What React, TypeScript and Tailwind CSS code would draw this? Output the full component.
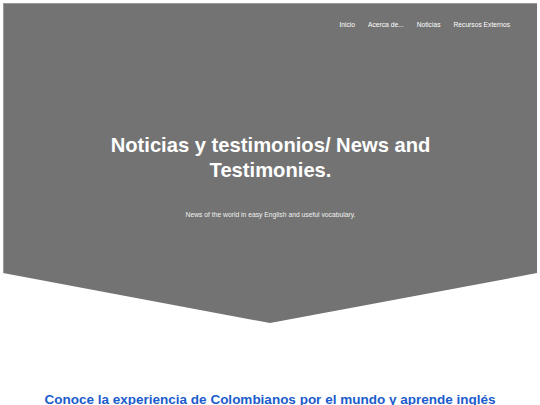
const NAV = ["Inicio", "Acerca de...", "Noticias", "Recursos Externos"];

export default function App() {
  return (
    <div
      className="min-h-screen bg-white p-[3px]"
      style={{ fontFamily: '"Liberation Sans", Arial, sans-serif' }}
    >
      <header className="flex h-[320px] flex-col border-l border-t border-[#9a9a9a] bg-[#737373] [clip-path:polygon(0_0,100%_0,100%_84.4%,50%_100%,0_84.4%)]">
        <nav className="flex justify-end gap-[13px] pr-[27px] pt-[16px] text-[6.7px] text-white">
          {NAV.map((item) => (
            <a key={item} href="#" className="leading-[10px]">
              {item}
            </a>
          ))}
        </nav>
        <div className="mt-[103px] flex flex-col items-center text-center text-white">
          <h1 className="w-[340px] text-[20.2px] font-bold leading-[25px]">
            Noticias y testimonios/ News and Testimonies.
          </h1>
          <p className="mt-[27px] text-[6.75px] text-[#f0f0f0]">
            News of the world in easy English and useful vocabulary.
          </p>
        </div>
      </header>
      <section className="mt-[69px] text-center">
        <h2 className="text-[13.5px] font-bold leading-[16px] text-[#1a5ccc]">
          Conoce la experiencia de Colombianos por el mundo y aprende inglés
        </h2>
      </section>
    </div>
  );
}
